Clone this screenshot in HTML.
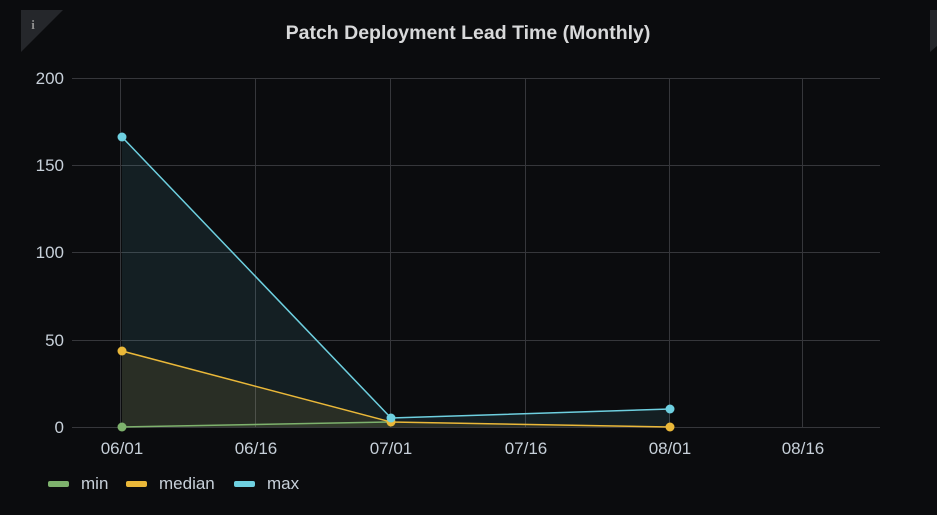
<!DOCTYPE html>
<html><head><style>
html,body{margin:0;padding:0;background:#0b0c0e;width:937px;height:515px;overflow:hidden;font-family:"Liberation Sans",sans-serif}
</style></head><body>
<svg width="937" height="515" xmlns="http://www.w3.org/2000/svg" style="position:absolute;left:0;top:0">
<rect width="937" height="515" fill="#0b0c0e"/>
<polygon points="21,10 63,10 21,52" fill="#25272b"/>
<text x="33" y="29" font-family="Liberation Serif,serif" font-weight="bold" font-size="13" fill="#8e8e8e" text-anchor="middle">i</text>
<polygon points="930,10 937,10 937,46 930,52" fill="#25272b"/>
<text x="468" y="39" font-family="Liberation Sans,sans-serif" font-weight="bold" font-size="19.5" fill="#d8d9da" text-anchor="middle">Patch Deployment Lead Time (Monthly)</text>
<g stroke="#36373b" stroke-width="1">
<line x1="72" y1="78.5" x2="880" y2="78.5"/>
<line x1="72" y1="165.5" x2="880" y2="165.5"/>
<line x1="72" y1="252.5" x2="880" y2="252.5"/>
<line x1="72" y1="340.5" x2="880" y2="340.5"/>
<line x1="72" y1="427.5" x2="880" y2="427.5"/>
<line x1="120.5" y1="78" x2="120.5" y2="427"/>
<line x1="255.5" y1="78" x2="255.5" y2="427"/>
<line x1="390.5" y1="78" x2="390.5" y2="427"/>
<line x1="525.5" y1="78" x2="525.5" y2="427"/>
<line x1="669.5" y1="78" x2="669.5" y2="427"/>
<line x1="802.5" y1="78" x2="802.5" y2="427"/>
</g>
<g font-size="17" fill="#c7d0d9" text-anchor="end">
<text x="64" y="84">200</text><text x="64" y="171">150</text><text x="64" y="258">100</text><text x="64" y="346">50</text><text x="64" y="433">0</text>
</g>
<g font-size="17" fill="#c7d0d9" text-anchor="middle">
<text x="122" y="454">06/01</text><text x="256" y="454">06/16</text><text x="391" y="454">07/01</text><text x="526" y="454">07/16</text><text x="670" y="454">08/01</text><text x="803" y="454">08/16</text>
</g>
<polygon points="122,137 391,418 670,409 670,427 122,427" fill="#6ed0e0" fill-opacity="0.1"/>
<polygon points="122,351 391,422 670,427 122,427" fill="#eab839" fill-opacity="0.1"/>
<polygon points="122,427 391,422 391,427" fill="#7eb26d" fill-opacity="0.1"/>
<polyline points="122,427 391,422" fill="none" stroke="#7eb26d" stroke-width="1.5"/>
<polyline points="122,351 391,422 670,427" fill="none" stroke="#eab839" stroke-width="1.5"/>
<polyline points="122,137 391,418 670,409" fill="none" stroke="#6ed0e0" stroke-width="1.5"/>
<circle cx="122" cy="427" r="4.5" fill="#7eb26d"/>
<circle cx="122" cy="351" r="4.5" fill="#eab839"/>
<circle cx="391" cy="422" r="4.5" fill="#eab839"/>
<circle cx="670" cy="427" r="4.5" fill="#eab839"/>
<circle cx="122" cy="137" r="4.5" fill="#6ed0e0"/>
<circle cx="391" cy="418" r="4.5" fill="#6ed0e0"/>
<circle cx="670" cy="409" r="4.5" fill="#6ed0e0"/>
<rect x="48" y="481" width="21" height="6" rx="2" fill="#7eb26d"/>
<rect x="126" y="481" width="21" height="6" rx="2" fill="#eab839"/>
<rect x="234" y="481" width="21" height="6" rx="2" fill="#6ed0e0"/>
<g font-size="17" fill="#c7d0d9">
<text x="81" y="489">min</text><text x="159" y="489">median</text><text x="267" y="489">max</text>
</g>
</svg>
</body></html>
